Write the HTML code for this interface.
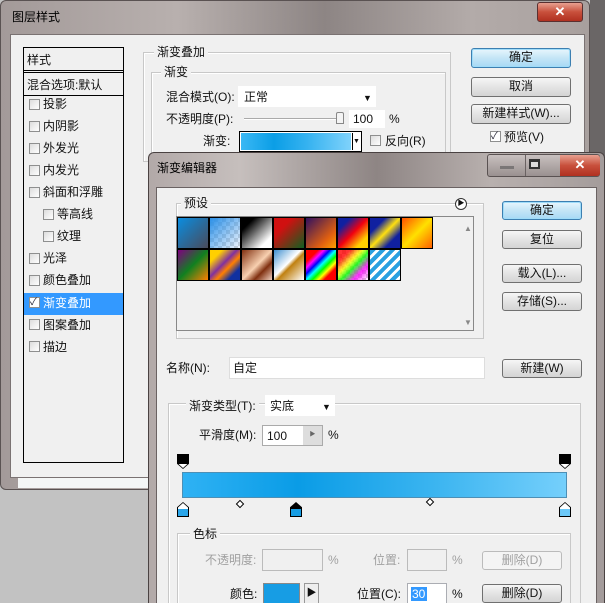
<!DOCTYPE html>
<html style="width:605px;height:603px;overflow:hidden"><head><meta charset="utf-8">
<style>
*{margin:0;padding:0;box-sizing:border-box}
body{width:605px;height:603px;overflow:hidden;background:#c2c2c2;position:relative;font-family:"Liberation Sans","Noto Sans CJK SC",sans-serif;font-size:12px;color:#111}
.a{position:absolute}
.t{position:absolute;white-space:nowrap;line-height:14px}
.btn{position:absolute;border:1px solid #707070;border-radius:3px;background:linear-gradient(#f6f6f6,#e4e4e4 50%,#d4d4d4);text-align:center;line-height:17px;font-size:12px}
.btnb{border-color:#3c7fb1;background:linear-gradient(#e8f6fd,#c4e5f6 50%,#a7d9f5);box-shadow:inset 0 0 0 1px #9fdcf9}
.fs{position:absolute;border:1px solid #c8c8c8;box-shadow:1px 1px 0 #fff inset}
.lbl{position:absolute;background:#f0f0f0;padding:0 3px;line-height:14px}
.cb{position:absolute;width:11px;height:11px;border:1px solid #8e8f8f;background:linear-gradient(135deg,#dcdcdc,#fff)}
.sw{position:absolute;width:32px;height:32px;border:1px solid #000}
.stop{position:absolute;width:12px;height:15px;background:#000;clip-path:polygon(50% 0,100% 35%,100% 100%,0 100%,0 35%)}
.stop i{position:absolute;left:1px;top:1px;right:1px;bottom:1px;clip-path:polygon(50% 0,100% 35%,100% 100%,0 100%,0 35%)}
</style></head><body>
<div class="a" style="left:0;top:0;width:590px;height:490px;background:linear-gradient(90deg,#a39a99,#b8b0ae 30%,#8d8584 55%,#b3aba9 80%,#a8a09e);border:1px solid #5a5252;border-radius:6px"></div>
<div class="a" style="left:590px;top:0;width:15px;height:160px;background:#6a6666"></div>
<div class="t" style="left:12px;top:10px;color:#000">图层样式</div>
<div class="a" style="left:537px;top:2px;width:46px;height:20px;border:1px solid #5a3030;border-radius:3px;background:linear-gradient(#e8a090,#c8503c 50%,#b03020);color:#fff;text-align:center;font-weight:bold;line-height:18px;font-size:13px">✕</div>
<div class="a" style="left:10px;top:34px;width:575px;height:444px;background:#f0f0f0;border:1px solid #7a7272"></div>
<div class="a" style="left:18px;top:478px;width:132px;height:10px;background:#f4f6f6"></div>
<div class="a" style="left:23px;top:47px;width:101px;height:416px;border:1px solid #000;background:#f0f0f0"></div>
<div class="t" style="left:27px;top:53px">样式</div>
<div class="a" style="left:24px;top:70px;width:99px;height:3px;border-top:1px solid #000;border-bottom:1px solid #000"></div>
<div class="t" style="left:27px;top:78px">混合选项:默认</div>
<div class="a" style="left:24px;top:95px;width:99px;height:1px;background:#000"></div>
<div class="a" style="left:24px;top:293px;width:99px;height:22px;background:#3399ff"></div>
<div class="cb" style="left:29px;top:99px"></div><div class="t" style="left:43px;top:97px">投影</div>
<div class="cb" style="left:29px;top:121px"></div><div class="t" style="left:43px;top:119px">内阴影</div>
<div class="cb" style="left:29px;top:143px"></div><div class="t" style="left:43px;top:141px">外发光</div>
<div class="cb" style="left:29px;top:165px"></div><div class="t" style="left:43px;top:163px">内发光</div>
<div class="cb" style="left:29px;top:187px"></div><div class="t" style="left:43px;top:185px">斜面和浮雕</div>
<div class="cb" style="left:43px;top:209px"></div><div class="t" style="left:57px;top:207px">等高线</div>
<div class="cb" style="left:43px;top:231px"></div><div class="t" style="left:57px;top:229px">纹理</div>
<div class="cb" style="left:29px;top:253px"></div><div class="t" style="left:43px;top:251px">光泽</div>
<div class="cb" style="left:29px;top:275px"></div><div class="t" style="left:43px;top:273px">颜色叠加</div>
<div class="cb" style="left:29px;top:297px;background:#fff;font-size:10px;line-height:9px;color:#223">✓</div><div class="t" style="left:43px;top:296px;color:#fff">渐变叠加</div>
<div class="cb" style="left:29px;top:319px"></div><div class="t" style="left:43px;top:318px">图案叠加</div>
<div class="cb" style="left:29px;top:341px"></div><div class="t" style="left:43px;top:340px">描边</div>
<div class="fs" style="left:143px;top:52px;width:308px;height:110px"></div>
<div class="lbl" style="left:154px;top:45px">渐变叠加</div>
<div class="fs" style="left:151px;top:72px;width:295px;height:90px"></div>
<div class="lbl" style="left:161px;top:65px">渐变</div>
<div class="t" style="left:166px;top:90px">混合模式(O):</div>
<div class="a" style="left:238px;top:86px;width:138px;height:21px;background:#fff"></div>
<div class="t" style="left:244px;top:90px">正常</div>
<div class="t" style="left:363px;top:91px;font-size:9px">▼</div>
<div class="t" style="left:166px;top:112px">不透明度(P):</div>
<div class="a" style="left:244px;top:118px;width:96px;height:2px;border-top:1px solid #aaa;border-bottom:1px solid #fff"></div>
<div class="a" style="left:336px;top:112px;width:8px;height:12px;border:1px solid #888;border-radius:2px 2px 0 0;background:#f4f4f4"></div>
<div class="a" style="left:349px;top:110px;width:36px;height:18px;background:#fff"></div>
<div class="t" style="left:353px;top:112px">100</div>
<div class="t" style="left:389px;top:112px">%</div>
<div class="t" style="left:203px;top:134px">渐变:</div>
<div class="a" style="left:239px;top:131px;width:123px;height:21px;border:1px solid #000;background:#fff"></div>
<div class="a" style="left:241px;top:133px;width:110px;height:17px;background:linear-gradient(90deg,#3ab8f4,#0b9ee6 30%,#35b2f0 60%,#7fd2fb)"></div>
<div class="a" style="left:352px;top:133px;width:8px;height:17px;border-left:1px solid #000;font-size:7px;line-height:17px;text-align:center">▼</div>
<div class="cb" style="left:370px;top:135px"></div>
<div class="t" style="left:385px;top:134px">反向(R)</div>
<div class="btn btnb" style="left:471px;top:48px;width:100px;height:20px">确定</div>
<div class="btn" style="left:471px;top:77px;width:100px;height:20px">取消</div>
<div class="btn" style="left:471px;top:104px;width:100px;height:20px">新建样式(W)...</div>
<div class="cb" style="left:490px;top:131px;background:#fff;font-size:10px;line-height:9px;color:#223">✓</div>
<div class="t" style="left:504px;top:130px">预览(V)</div>
<div class="a" style="left:148px;top:152px;width:457px;height:451px;background:linear-gradient(90deg,#b2a9a8,#c6bfbd 20%,#8e8584 50%,#b8b0ae 75%,#a49c9b);border:1px solid #4a4242;border-bottom:none;border-radius:6px 6px 0 0"></div>
<div class="t" style="left:157px;top:161px;color:#000">渐变编辑器</div>
<div class="a" style="left:487px;top:154px;width:113px;height:23px;border:1px solid #5a5252;border-radius:3px;background:linear-gradient(#c8c0bf,#9a9190)"></div>
<div class="a" style="left:525px;top:155px;width:1px;height:21px;background:#6a6262"></div>
<div class="a" style="left:500px;top:166px;width:14px;height:3px;background:#7a7676"></div>
<div class="a" style="left:529px;top:159px;width:11px;height:10px;border:2px solid #333;border-top-width:3px;background:#ddd"></div>
<div class="a" style="left:560px;top:155px;width:40px;height:21px;border-radius:0 3px 3px 0;background:linear-gradient(#e8a090,#c8503c 50%,#b03020);color:#fff;text-align:center;font-weight:bold;line-height:20px;font-size:13px">✕</div>
<div class="a" style="left:156px;top:187px;width:441px;height:416px;background:#f0f0f0;border:1px solid #6a6262;border-bottom:none"></div>
<div class="fs" style="left:176px;top:203px;width:308px;height:136px"></div>
<div class="lbl" style="left:181px;top:196px">预设</div>
<div class="a" style="left:455px;top:198px;width:12px;height:12px;border:1px solid #333;border-radius:50%;background:#fff;font-size:7px;line-height:10px;text-align:center">▶</div>
<div class="a" style="left:176px;top:216px;width:298px;height:115px;border:1px solid #888;background:#f0f0f0"></div>
<div class="t" style="left:464px;top:222px;font-size:8px;color:#888">▲</div>
<div class="t" style="left:464px;top:316px;font-size:8px;color:#888">▼</div>
<div class="sw" style="left:177px;top:217px;background:linear-gradient(135deg,#0a8de0,#4a4a5a)"></div>
<div class="sw" style="left:209px;top:217px;background:linear-gradient(135deg,#2a90e8,rgba(200,220,250,.3)),repeating-conic-gradient(#ccc 0 25%,#fff 0 50%) 0 0/8px 8px"></div>
<div class="sw" style="left:241px;top:217px;background:linear-gradient(135deg,#000 20%,#fff 80%)"></div>
<div class="sw" style="left:273px;top:217px;background:linear-gradient(135deg,#d01010 30%,#106020)"></div>
<div class="sw" style="left:305px;top:217px;background:linear-gradient(135deg,#301060,#e06010 70%,#ffa000)"></div>
<div class="sw" style="left:337px;top:217px;background:linear-gradient(135deg,#1020a0 20%,#f00010 50%,#ffd000 80%)"></div>
<div class="sw" style="left:369px;top:217px;background:linear-gradient(135deg,#1020a0 25%,#ffe010 50%,#1020a0 75%)"></div>
<div class="sw" style="left:401px;top:217px;background:linear-gradient(135deg,#ff5000,#ffe000 50%,#ff6000)"></div>
<div class="sw" style="left:177px;top:249px;background:linear-gradient(135deg,#800080,#108020 50%,#ff8000)"></div>
<div class="sw" style="left:209px;top:249px;background:linear-gradient(135deg,#ffd000 20%,#8030a0 45%,#ff8000 60%,#1030a0 80%)"></div>
<div class="sw" style="left:241px;top:249px;background:linear-gradient(135deg,#803010,#f8d0b0 50%,#803010 70%,#f0d0c0)"></div>
<div class="sw" style="left:273px;top:249px;background:linear-gradient(135deg,#4090d0,#fff 45%,#c08010 55%,#fff)"></div>
<div class="sw" style="left:305px;top:249px;background:linear-gradient(135deg,#f00 20%,#f0f 30%,#00f 40%,#0ff 50%,#0f0 60%,#ff0 70%,#f00 80%)"></div>
<div class="sw" style="left:337px;top:249px;background:linear-gradient(135deg,rgba(255,0,0,.8) 20%,rgba(255,255,0,.8) 40%,rgba(0,255,0,.8) 55%,rgba(255,0,255,.8) 75%,transparent),repeating-conic-gradient(#ccc 0 25%,#fff 0 50%) 0 0/8px 8px"></div>
<div class="sw" style="left:369px;top:249px;background:repeating-linear-gradient(135deg,#2aa0e0 0 4px,#fff 4px 7px)"></div>
<div class="btn btnb" style="left:502px;top:201px;width:80px;height:19px">确定</div>
<div class="btn" style="left:502px;top:230px;width:80px;height:19px">复位</div>
<div class="btn" style="left:502px;top:264px;width:80px;height:19px">载入(L)...</div>
<div class="btn" style="left:502px;top:292px;width:80px;height:19px">存储(S)...</div>
<div class="t" style="left:166px;top:361px">名称(N):</div>
<div class="a" style="left:229px;top:357px;width:256px;height:22px;background:#fff;border:1px solid #ddd"></div>
<div class="t" style="left:233px;top:361px">自定</div>
<div class="btn" style="left:502px;top:359px;width:80px;height:19px">新建(W)</div>
<div class="fs" style="left:168px;top:403px;width:413px;height:210px"></div>
<div class="lbl" style="left:186px;top:399px">渐变类型(T):</div>
<div class="a" style="left:265px;top:395px;width:70px;height:21px;background:#fff"></div>
<div class="t" style="left:270px;top:399px">实底</div>
<div class="t" style="left:322px;top:400px;font-size:9px">▼</div>
<div class="t" style="left:199px;top:428px">平滑度(M):</div>
<div class="a" style="left:262px;top:425px;width:61px;height:21px;background:#fff;border:1px solid #aaa"></div>
<div class="a" style="left:303px;top:426px;width:19px;height:19px;background:#ddd;font-size:6px;line-height:19px;text-align:center;color:#666">▶</div>
<div class="t" style="left:267px;top:429px">100</div>
<div class="t" style="left:328px;top:428px">%</div>
<div class="stop" style="left:177px;top:454px;transform:rotate(180deg)"><i style="background:linear-gradient(#fff 30%,#000 30%)"></i></div>
<div class="stop" style="left:559px;top:454px;transform:rotate(180deg)"><i style="background:linear-gradient(#fff 30%,#000 30%)"></i></div>
<div class="a" style="left:182px;top:472px;width:385px;height:26px;background:linear-gradient(90deg,#2fb2f4,#0a9ce6 30%,#3ab4f0 65%,#75cffb);border:1px solid #4d8fb5"></div>
<div class="stop" style="left:177px;top:502px"><i style="background:linear-gradient(#fff 45%,#2aa6ea 45%)"></i></div>
<div class="stop" style="left:290px;top:502px"><i style="background:linear-gradient(#000 45%,#179de4 45%)"></i></div>
<div class="stop" style="left:559px;top:502px"><i style="background:linear-gradient(#fff 45%,#6cc8f8 45%)"></i></div>
<div class="a" style="left:237px;top:501px;width:6px;height:6px;border:1px solid #000;transform:rotate(45deg);background:#fff"></div>
<div class="a" style="left:427px;top:499px;width:6px;height:6px;border:1px solid #000;transform:rotate(45deg);background:#fff"></div>
<div class="fs" style="left:177px;top:533px;width:394px;height:80px"></div>
<div class="lbl" style="left:190px;top:527px">色标</div>
<div class="t" style="left:205px;top:553px;color:#a0a0a0">不透明度:</div>
<div class="a" style="left:262px;top:549px;width:61px;height:22px;border:1px solid #bbb;background:#f0f0f0"></div>
<div class="t" style="left:328px;top:553px;color:#a0a0a0">%</div>
<div class="t" style="left:373px;top:553px;color:#a0a0a0">位置:</div>
<div class="a" style="left:407px;top:549px;width:40px;height:22px;border:1px solid #bbb;background:#f0f0f0"></div>
<div class="t" style="left:452px;top:553px;color:#a0a0a0">%</div>
<div class="btn" style="left:482px;top:551px;width:80px;height:19px;color:#a0a0a0;border-color:#bbb;background:#f4f4f4">删除(D)</div>
<div class="t" style="left:230px;top:587px">颜色:</div>
<div class="a" style="left:263px;top:583px;width:37px;height:22px;background:#179de4;border:1px solid #888"></div>
<div class="a" style="left:304px;top:583px;width:15px;height:22px;border:1px solid #999;background:#eee;font-size:10px;line-height:20px;text-align:center">▶</div>
<div class="t" style="left:357px;top:587px">位置(C):</div>
<div class="a" style="left:407px;top:583px;width:40px;height:22px;border:1px solid #abadb3;background:#fff"></div>
<div class="a" style="left:411px;top:587px;width:16px;height:14px;background:#3399ff;color:#fff;line-height:14px;padding-left:1px">30</div>
<div class="t" style="left:452px;top:587px">%</div>
<div class="btn" style="left:482px;top:584px;width:80px;height:19px">删除(D)</div>
</body></html>
